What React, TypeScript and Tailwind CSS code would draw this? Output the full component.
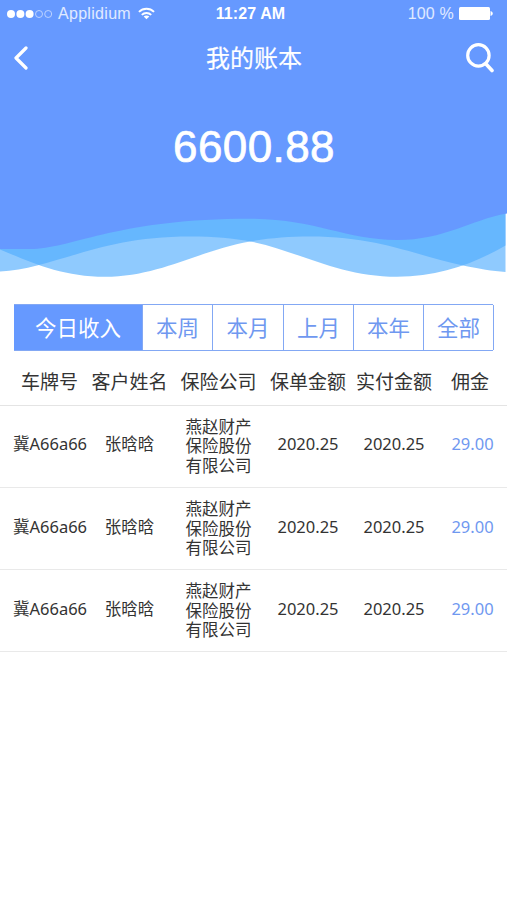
import { useState } from "react"

const tabs = ["今日收入", "本周", "本月", "上月", "本年", "全部"]

const columns = ["车牌号", "客户姓名", "保险公司", "保单金额", "实付金额", "佣金"]

const records = [
  { id: 1, plate: "冀A66a66", customer: "张晗晗", company: "燕赵财产保险股份有限公司", premium: "2020.25", paid: "2020.25", commission: "29.00" },
  { id: 2, plate: "冀A66a66", customer: "张晗晗", company: "燕赵财产保险股份有限公司", premium: "2020.25", paid: "2020.25", commission: "29.00" },
  { id: 3, plate: "冀A66a66", customer: "张晗晗", company: "燕赵财产保险股份有限公司", premium: "2020.25", paid: "2020.25", commission: "29.00" },
]

function StatusBar() {
  return (
    <div className="grid h-7 grid-cols-[1fr_auto_1fr] items-center pl-[7px] pr-[14px] font-['Liberation_Sans',sans-serif] text-[16px] leading-7">
      <div className="flex items-center text-white/80">
        <svg width="46" height="10" viewBox="0 0 46 10" className="mr-[5px] shrink-0">
          <circle cx="4" cy="5" r="4" fill="#fff" />
          <circle cx="13.4" cy="5" r="4" fill="#fff" />
          <circle cx="22.6" cy="5" r="4" fill="#fff" />
          <circle cx="32" cy="5" r="3.5" fill="none" stroke="#c5d8ff" strokeWidth="0.9" />
          <circle cx="41.2" cy="5" r="3.5" fill="none" stroke="#c5d8ff" strokeWidth="0.9" />
        </svg>
        <span className="tracking-[0.3px]">Applidium</span>
        <svg width="17" height="13" viewBox="0 0 18 13" fill="none" stroke="#fff" strokeWidth="2" className="ml-[7px] -mt-[2px]">
          <path d="M1 4.8C5.5.3 12.5.3 17 4.8" />
          <path d="M4 8c2.8-2.8 7.2-2.8 10 0" />
          <path d="M9 12.5L6 9.7c1.7-1.5 4.3-1.5 6 0z" fill="#fff" stroke="none" />
        </svg>
      </div>
      <span className="pl-px font-bold tracking-[0.1px]">11:27 AM</span>
      <div className="flex items-center justify-end text-white/80">
        <span className="tracking-[0.2px]">100 %</span>
        <svg width="34" height="13" viewBox="0 0 34 13" fill="#fff" className="-mt-px ml-[5px]">
          <rect x="0" y="0" width="31" height="13" rx="1.5" />
          <path d="M31.500 4c3 1 3 4 0 5z" />
        </svg>
      </div>
    </div>
  )
}

function NavBar() {
  return (
    <div className="flex h-[60px] items-center justify-between pl-[14px] pr-[13px]">
      <button>
        <svg width="14" height="24" viewBox="0 0 14 24" fill="none" stroke="#fff" strokeWidth="3.2" strokeLinecap="round" strokeLinejoin="round">
          <path d="M12 2L2 12l10 10" />
        </svg>
      </button>
      <h1 className="pl-[14px] text-2xl [-webkit-text-stroke:0.2px_white]">我的账本</h1>
      <button>
        <svg width="28" height="30" viewBox="0 0 28 30" fill="none" stroke="#fff" strokeLinecap="round">
          <circle cx="12.4" cy="12.4" r="10.7" strokeWidth="3.2" />
          <path d="M20 21l6 6.5" strokeWidth="3.6" />
        </svg>
      </button>
    </div>
  )
}

function Waves() {
  return (
    <svg width="507" height="68" viewBox="0 212 507 68" className="block bg-white">
      <g fill="#4eabfd" fillOpacity="0.634">
        <path d="M0 212V249.500C30 262 62 276.800 105 276.800C160 276.800 200 250 250 241.500C270 238 288 236.500 310 236.500C380 236.500 420 257 463 265.500C480 269 492 271 505.500 272V212z" />
        <path d="M0 212V271.500C12 271 25 268.500 37 265.500C85 253 120 236.500 190 236.500C215 236.500 232 238 253 242C300 252 340 276.800 397 276.800C440 276.800 475 263 505.500 245.500V212z" />
      </g>
      <path d="M0 212V249H34C75 247 120 218.800 250 218.800C315 218.800 345 240 397 240C445 240 470 220 507 213.500V212z" fill="#6699ff" />
    </svg>
  )
}

export default function App() {
  const [activeTab, setActiveTab] = useState(0)

  return (
    <div className="min-h-[900px] w-[507px] bg-white font-['Noto_Sans','Noto_Sans_CJK_SC',sans-serif] text-[#333]">
      <header className="bg-[#6699ff] text-white">
        <StatusBar />
        <NavBar />
        <div className="flex h-[124px] justify-center pt-[33px] pl-px font-['Liberation_Sans',sans-serif] text-[44px] leading-[52px] tracking-[0.4px] [-webkit-text-stroke:0.7px_white]">
          6600.88
        </div>
        <Waves />
      </header>

      <nav className="mx-[14px] mt-6 grid h-[47px] grid-cols-[129px_70px_71px_70px_70px_70px] border-y border-[#83a8f4]">
        {tabs.map((tab, i) => (
          <button
            key={tab}
            onClick={() => setActiveTab(i)}
            className={`border-r border-[#83a8f4] pt-px text-[21.500px] ${
              activeTab === i ? "bg-[#6699ff] text-white" : "text-[#6f98f0]"
            }`}
          >
            {tab}
          </button>
        ))}
      </nav>

      <table className="w-full table-fixed text-center">
        <colgroup>
          <col className="w-[88px]" />
          <col className="w-[83px]" />
          <col className="w-[95px]" />
          <col className="w-[84px]" />
          <col className="w-[88px]" />
          <col className="w-[69px]" />
        </colgroup>
        <thead>
          <tr className="h-[54px] border-b border-[#e4e4e4] text-[19px]">
            {columns.map((column) => (
              <th key={column} className="p-0 pt-[8px] font-normal whitespace-nowrap first:pl-[11px] last:pr-[5px]">
                {column}
              </th>
            ))}
          </tr>
        </thead>
        <tbody>
          {records.map((record) => (
            <tr key={record.id} className="h-[82.300px] border-b border-[#e9e9e9] text-[16.500px] leading-[19.500px]">
              <td className="p-0 pb-1 pl-[12px] whitespace-nowrap">{record.plate}</td>
              <td className="p-0 pb-1">{record.customer}</td>
              <td className="px-[14px] py-0">{record.company}</td>
              <td className="p-0 pb-1">{record.premium}</td>
              <td className="p-0 pb-1">{record.paid}</td>
              <td className="p-0 pb-1 text-[#6f98f0]">{record.commission}</td>
            </tr>
          ))}
        </tbody>
      </table>
    </div>
  )
}
